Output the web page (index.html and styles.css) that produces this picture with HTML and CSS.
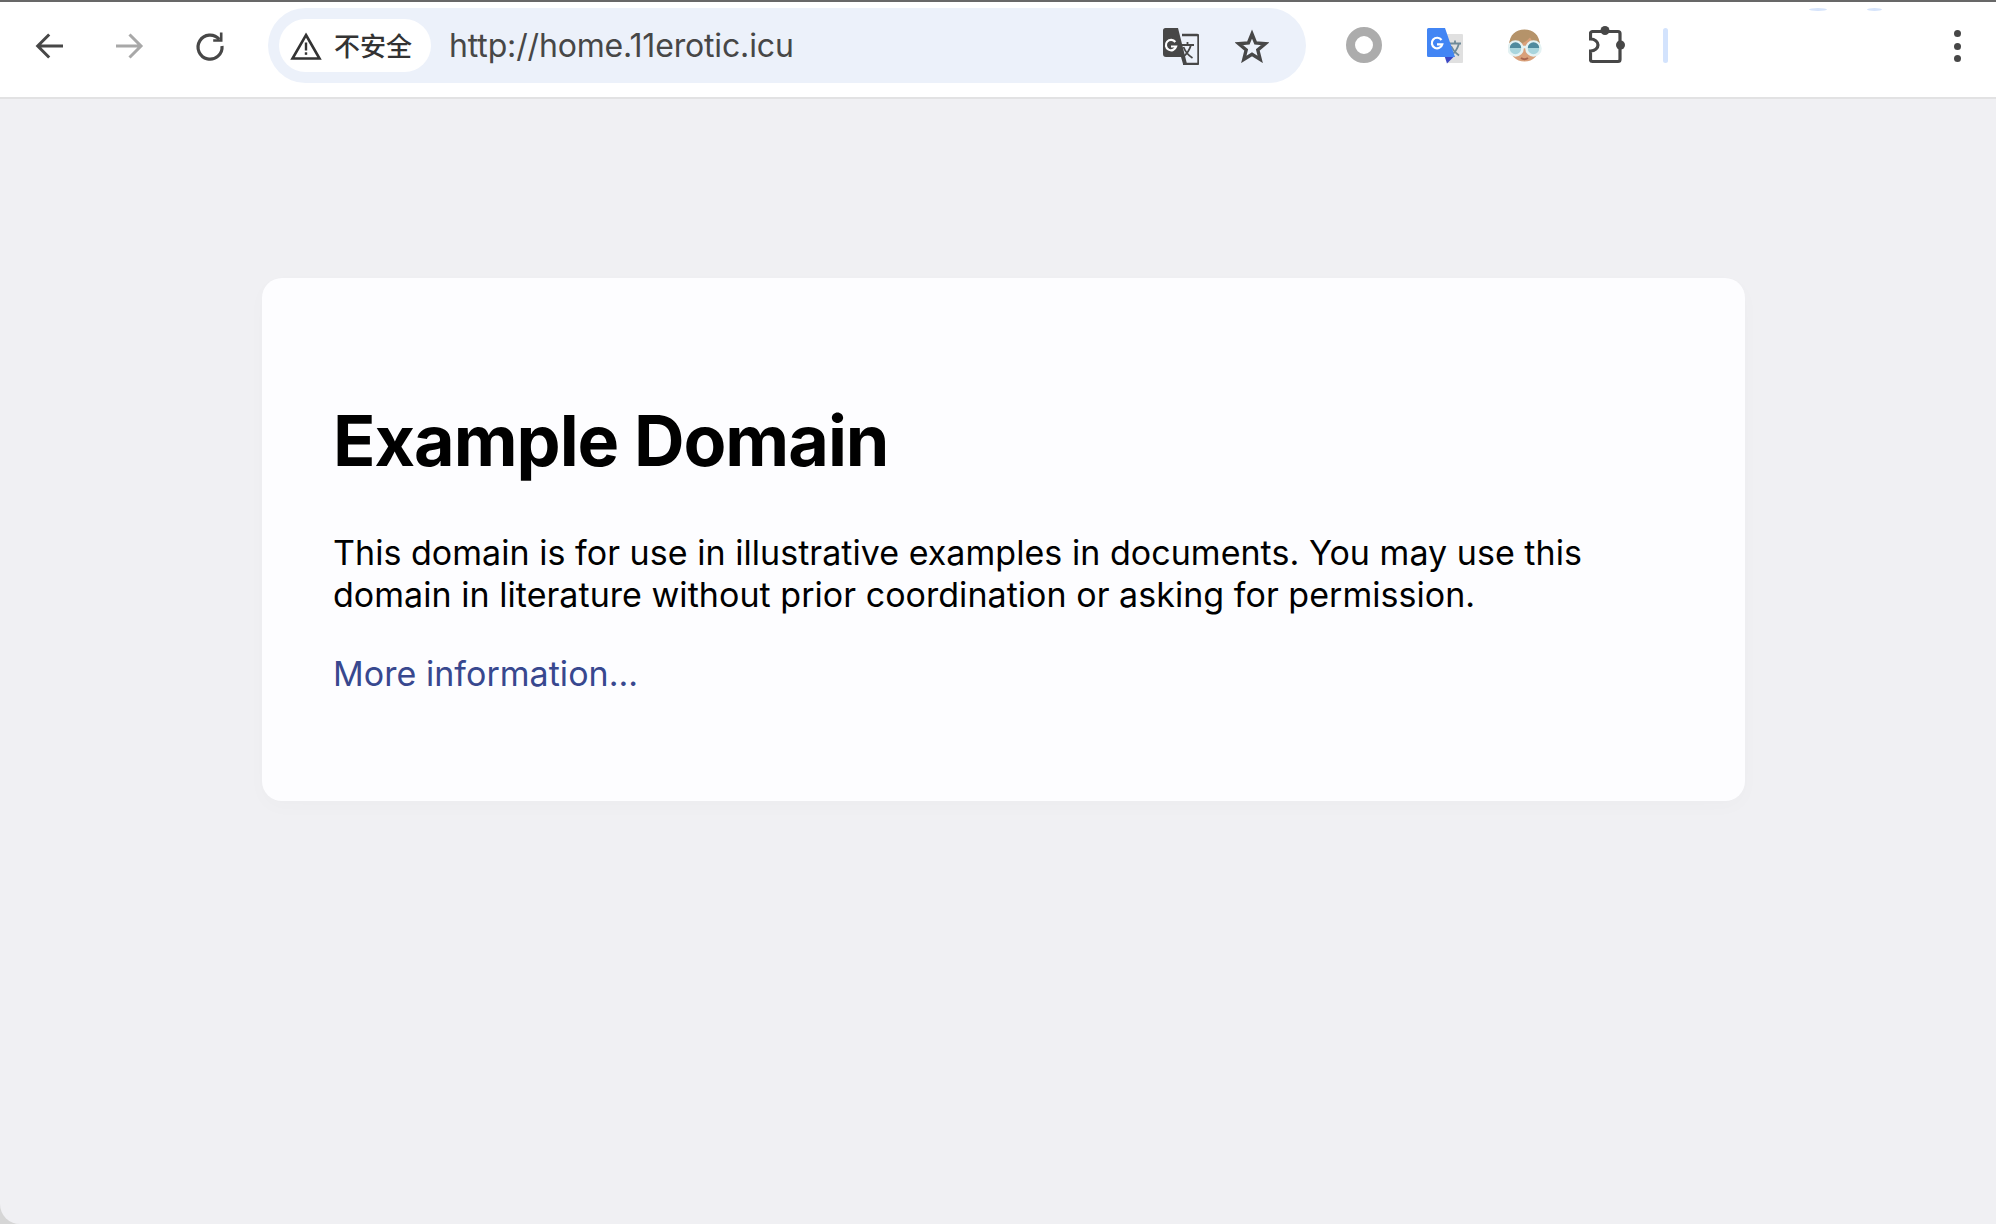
FILE: index.html
```html
<!DOCTYPE html>
<html lang="en">
<head>
<meta charset="utf-8">
<title>Example Domain</title>
<link rel="stylesheet" href="styles.css">
</head>
<body>
<div class="window">
  <header class="toolbar">
    <span class="glint glint-a"></span>
    <span class="glint glint-b"></span>
    <nav class="nav">
      <svg class="icon" viewBox="0 0 32 32"><path d="M30 16H5.500M16.200 4.500 4.700 16l11.500 11.500" fill="none" stroke="#474747" stroke-width="3"/></svg>
      <svg class="icon" viewBox="0 0 32 32"><path d="M3 16H27.500M16.500 4.500 28 16 16.500 27.500" fill="none" stroke="#a8a8a8" stroke-width="3"/></svg>
      <svg class="icon" viewBox="0 0 32 32"><g transform="translate(1 -1)"><path d="M25.200 10.400A12 12 0 1 0 28 17" fill="none" stroke="#474747" stroke-width="3.200"/><path d="M28.500 3.500V12.800H19.200V10.200H25.900V3.500Z" fill="#474747"/></g></svg>
    </nav>
    <div class="omnibox">
      <div class="chip">
        <svg class="warn" viewBox="0 0 32 28"><path d="M16 3 29.500 26.500H2.500Z" fill="none" stroke="#333" stroke-width="2.600"/><rect x="14.800" y="10.500" width="2.400" height="8" fill="#333"/><rect x="14.800" y="20.300" width="2.400" height="2.500" fill="#333"/></svg>
        <span class="chip-text">不安全</span>
      </div>
      <span class="url">http://home.11erotic.icu</span>
      <div class="omni-actions">
        <svg class="glyph" viewBox="0 0 36 38">
          <path d="M19 8H34a1.500 1.500 0 0 1 1.500 1.500V35.500a1.500 1.500 0 0 1-1.500 1.500H20" fill="none" stroke="#474747" stroke-width="2.400"/>
          <path d="M2.500 1H15L24 37H20L18 30H3a3 3 0 0 1-3-3V3.500a2.500 2.500 0 0 1 2.500-2.500Z" fill="#474747"/>
          <path d="M12.300 15a5.200 5.200 0 1 0 .8 4.500H8" fill="none" stroke="#fff" stroke-width="2.200"/>
          <path d="M18 18H31M24.500 15v3M28 18c-1.500 5-4 9-8 12M20.500 20c2 5 5 8.500 9 11" fill="none" stroke="#474747" stroke-width="1.800"/>
        </svg>
        <svg class="star" viewBox="0 0 34 34"><path d="M17 5 20.600 14 30.200 14.700 22.800 20.900 25.200 30.400 17 25.200 8.800 30.400 11.200 20.900 3.800 14.700 13.400 14Z" fill="none" stroke="#474747" stroke-width="3.400"/></svg>
      </div>
    </div>
    <div class="extensions">
      <span class="ring"></span>
      <svg class="glyph" viewBox="0 0 36 38">
        <path d="M18 8H35a1 1 0 0 1 1 1V36a1 1 0 0 1-1 1H21Z" fill="#e0e0e0"/>
        <path d="M22 17.500H34M28 14.500v3M32 17.500c-1.500 5-4 9-7.500 11.500M24 20c2 4.500 4.500 7 8 9.500" fill="none" stroke="#6f8a98" stroke-width="1.800"/>
        <path d="M17.500 30H27.500L20 37.500Z" fill="#3b47c4"/>
        <path d="M1.500 2H18L28 31H1.500a1.500 1.500 0 0 1-1.500-1.500V3.500A1.500 1.500 0 0 1 1.500 2Z" fill="#4285f4"/>
        <path d="M14.500 14a5.300 5.300 0 1 0 .8 4.300H10" fill="none" stroke="#fff" stroke-width="2.200"/>
      </svg>
      <svg class="glyph" viewBox="0 0 36 38">
        <circle cx="16.500" cy="20" r="15.500" fill="#d9a07a"/>
        <path d="M1.500 22C0 10 7 3.500 16.500 3.500S33 10 31.500 22C27 19 24 15 22 11.500 17 17 10 20 1.500 22Z" fill="#b5936a"/>
        <path d="M13 32q3.500 2.500 7 0" fill="none" stroke="#a8654e" stroke-width="2"/>
        <circle cx="7.500" cy="22.500" r="7" fill="#a9d5dd" stroke="#e4f2f3" stroke-width="2.600"/>
        <circle cx="25.500" cy="22.500" r="7" fill="#a9d5dd" stroke="#e4f2f3" stroke-width="2.600"/>
        <path d="M1.800 22a5.700 5.700 0 0 1 11.400 0ZM19.800 22a5.700 5.700 0 0 1 11.400 0Z" fill="#4f8a9e"/>
        <path d="M14 21h5" stroke="#e4f2f3" stroke-width="2.600"/>
      </svg>
      <svg class="glyph" viewBox="0 0 36 38">
        <path d="M3.500 5.500H29a2 2 0 0 1 2 2V33.500a2 2 0 0 1-2 2H3.500a2 2 0 0 1-2-2V25C6 25 9 22 9 19S6 13 1.500 13V7.500a2 2 0 0 1 2-2Z" fill="none" stroke="#474747" stroke-width="3.200"/>
        <circle cx="16" cy="4.500" r="4.500" fill="#474747"/>
        <circle cx="31.500" cy="19" r="4.500" fill="#474747"/>
      </svg>
    </div>
    <span class="divider"></span>
    <div class="menu"><i></i><i></i><i></i></div>
  </header>
  <main class="content">
    <article class="card">
      <h1 class="title">Example Domain</h1>
      <p class="lead">This domain is for use in illustrative examples in documents. You may use this domain in literature without prior coordination or asking for permission.</p>
      <p class="more"><a class="link" href="#">More information...</a></p>
    </article>
  </main>
</div>
</body>
</html>
```
FILE: styles.css
```css
* { box-sizing: border-box; }
html, body { margin: 0; height: 100%; background: #d6d6d6; }
.window {
  width: 1996px;
  height: 1224px;
  display: flex;
  flex-direction: column;
  background: #f0f0f3;
  border-bottom-left-radius: 20px;
  overflow: hidden;
  font-family: Inter, "Noto Sans CJK SC", sans-serif;
}
.toolbar {
  position: relative;
  flex: none;
  height: 99px;
  display: flex;
  align-items: flex-start;
  background: #fff;
  border-top: 2px solid #686868;
  border-bottom: 2px solid #e2e2e3;
}
.glint { position: absolute; top: 6px; height: 3px; border-radius: 50%; background: #d6e4fb; }
.glint-a { left: 1809px; width: 18px; }
.glint-b { left: 1867px; width: 15px; }
.nav { display: flex; gap: 48px; margin: 28px 0 0 33px; }
.icon { width: 32px; height: 32px; display: block; }
.omnibox {
  display: flex;
  align-items: center;
  width: 1038px;
  height: 75px;
  margin: 6px 0 0 43px;
  padding: 0 0 0 11px;
  background: #ecf1fa;
  border-radius: 38px;
}
.chip {
  display: flex;
  align-items: center;
  gap: 12px;
  width: 152px;
  height: 53px;
  padding-left: 11px;
  background: #fff;
  border-radius: 27px;
}
.warn { width: 32px; height: 28px; display: block; }
.chip-text { padding-bottom: 2px; font-size: 26px; font-weight: 500; color: #333; font-family: "Noto Sans CJK SC", sans-serif; }
.url { margin-left: 18px; font-size: 32px; letter-spacing: -0.15px; color: #474747; flex: 1; }
.omni-actions { display: flex; align-items: center; gap: 36px; margin-right: 37px; }
.glyph { width: 36px; height: 38px; display: block; }
.star { width: 34px; height: 34px; display: block; }
.extensions { display: flex; align-items: center; gap: 45px; margin: 24px 0 0 40px; }
.ring { display: block; width: 36px; height: 36px; border: 9.5px solid #acacac; border-radius: 50%; }
.divider { width: 5px; height: 35px; margin: 26px 0 0 38px; background: #d3e3fd; border-radius: 3px; }
.menu { display: flex; flex-direction: column; gap: 5.5px; margin: 28px 0 0 286px; }
.menu i { display: block; width: 7px; height: 7px; background: #474747; border-radius: 50%; }
.content { flex: 1; padding: 179px 0 0 262px; }
.card {
  width: 1483px;
  height: 523px;
  padding: 122px 71px 0;
  background: #fdfdff;
  border-radius: 20px;
  box-shadow: 0 6px 20px rgba(0, 0, 0, 0.02);
}
.title { margin: 0; font-size: 70px; line-height: 82px; font-weight: 700; color: #000; letter-spacing: -1px; }
.lead { margin: 50px 0 0; font-size: 34px; line-height: 42px; letter-spacing: 0.04px; color: #000; }
.more { margin: 37px 0 0; font-size: 34px; line-height: 42px; letter-spacing: 0.04px; }
.link { color: #38488f; text-decoration: none; }
```
